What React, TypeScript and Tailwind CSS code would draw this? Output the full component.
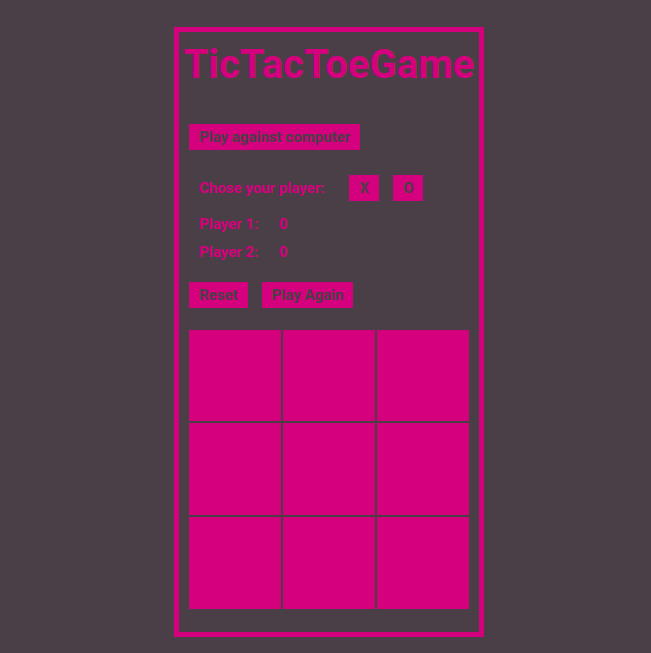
import { useState } from 'react'

const cells = Array.from({ length: 9 }, (_, i) => i)

export default function App() {
  const [board, setBoard] = useState<string[]>(Array(9).fill(''))

  return (
    <div className="min-h-screen bg-[#4a3f47] pt-[27px] font-['Roboto',sans-serif]">
      <div className="ml-[174px] w-[310px] h-[610px] border-[5px] border-[#d5007d] px-[10px]">
        <h1 className="-mx-[10px] mt-[13px] text-center text-[40px] leading-[40px] font-bold text-[#d5007d] whitespace-nowrap">
          TicTacToeGame
        </h1>

        <button className="mt-[39px] block bg-[#d5007d] px-[10px] py-[3px] text-[15px] leading-5 font-bold text-[#4a3f47]">
          Play against computer
        </button>

        <div className="mt-[25px] flex items-center pl-[10px]">
          <span className="text-[15px] leading-5 font-bold text-[#d5007d]">Chose your player:</span>
          <button className="ml-[25px] w-[30px] py-[3px] bg-[#d5007d] text-[15px] leading-5 font-bold text-[#4a3f47]">X</button>
          <button className="ml-[14px] w-[30px] py-[3px] bg-[#d5007d] text-[15px] leading-5 font-bold text-[#4a3f47]">O</button>
        </div>

        <div className="mt-[13px] flex pl-[10px] text-[15px] leading-5 font-bold text-[#d5007d]">
          <span className="w-[80px]">Player 1:</span>
          <span>0</span>
        </div>
        <div className="mt-[8px] flex pl-[10px] text-[15px] leading-5 font-bold text-[#d5007d]">
          <span className="w-[80px]">Player 2:</span>
          <span>0</span>
        </div>

        <div className="mt-[20px] flex gap-[14px]">
          <button
            onClick={() => setBoard(Array(9).fill(''))}
            className="bg-[#d5007d] px-[10px] py-[3px] text-[15px] leading-5 font-bold text-[#4a3f47]"
          >
            Reset
          </button>
          <button className="bg-[#d5007d] px-[10px] py-[3px] text-[15px] leading-5 font-bold text-[#4a3f47]">
            Play Again
          </button>
        </div>

        <div className="mt-[22px] grid w-[280px] grid-cols-[92px_92px_92px] grid-rows-[91px_92px_92px] gap-[2px]">
          {cells.map((i) => (
            <div
              key={i}
              onClick={() => setBoard((b) => b.map((v, j) => (j === i && !v ? 'X' : v)))}
              className="flex items-center justify-center bg-[#d5007d] text-[48px] font-bold text-[#4a3f47]"
            >
              {board[i]}
            </div>
          ))}
        </div>
      </div>
    </div>
  )
}
